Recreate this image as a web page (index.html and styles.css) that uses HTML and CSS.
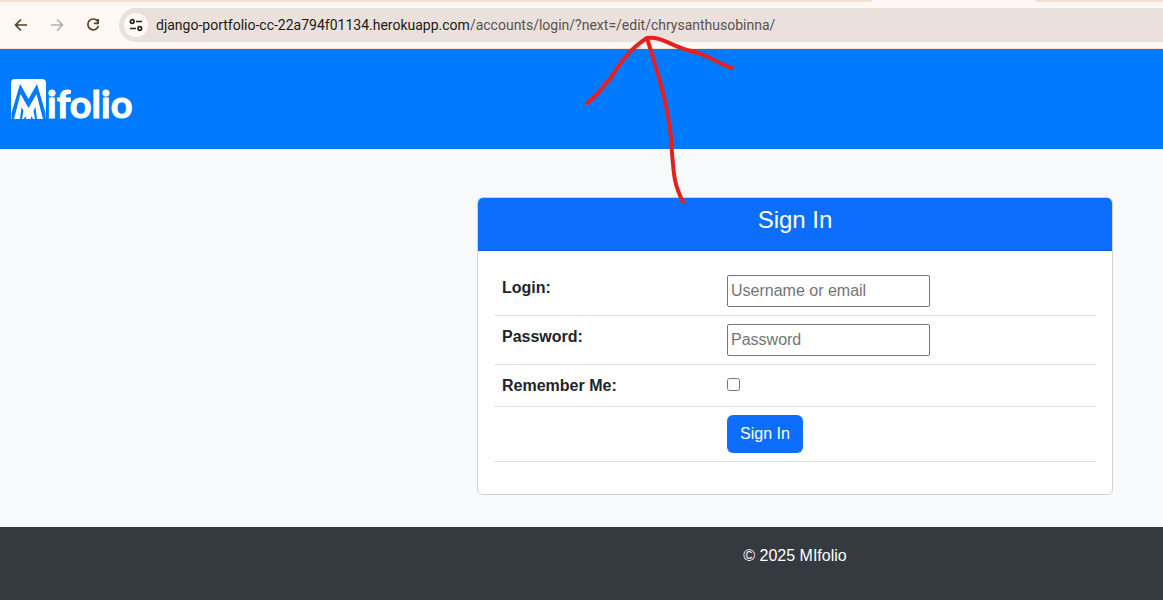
FILE: index.html
```html
<!DOCTYPE html>
<html lang="en">
<head>
<meta charset="utf-8">
<title>MIfolio - Sign In</title>
<link rel="stylesheet" href="styles.css">
</head>
<body>
<div class="browser">
  <div class="tabstrip"><span class="tab tab-left"></span><span class="tab tab-right"></span></div>
  <div class="toolbar">
    <button class="nav-btn" type="button" aria-label="Back"><svg width="16" height="16" viewBox="0 0 16 16"><path d="M14 8H3M8 2.500 2.500 8 8 13.500"/></svg></button>
    <button class="nav-btn disabled" type="button" aria-label="Forward"><svg width="16" height="16" viewBox="0 0 16 16"><path d="M2 8h11M8 2.500 13.500 8 8 13.500"/></svg></button>
    <button class="nav-btn" type="button" aria-label="Reload"><svg width="16" height="16" viewBox="0 0 16 16"><path d="M12.800 4.500A5.400 5.400 0 1 0 13.400 9M13.200 2v4.300H9"/></svg></button>
    <div class="address">
      <button class="site-info" type="button" aria-label="Site information"><svg width="14" height="14" viewBox="0 0 14 14"><circle cx="3.200" cy="3.500" r="1.800"/><path d="M7 3.500h6M1 10.500h6"/><circle cx="10.800" cy="10.500" r="1.800"/></svg></button>
      <div class="url">django-portfolio-cc-22a794f01134.herokuapp.com<span class="path">/accounts/login/?next=/edit/chrysanthusobinna/</span></div>
    </div>
  </div>
</div>
<header class="site-header">
  <a href="#" class="logo" aria-label="Mifolio">
    <svg width="140" height="50" viewBox="0 0 140 50">
      <path fill="#fff" d="M1 6a4 4 0 0 1 4-4h27a4 4 0 0 1 4 4v33l-1 3H1z"/>
      <path fill="#007bff" d="M1.500 42V36L10 7l8.500 15L27 7l8.500 29v6h-2.500L26.500 17 18.500 31 10.500 17 4 42z"/>
      <path fill="#007bff" d="M10 42l1.500-12 2 4-1.500 8zM14 42l1.200-3 1.300 3zM27 42l-1.500-12-2 4 1.500 8zM20.500 42l1.200-3 1.300 3z"/>
      <text class="wordmark" x="37" y="41">ifolio</text>
    </svg>
  </a>
</header>
<main class="content">
  <section class="card">
    <h1 class="card-header">Sign In</h1>
    <form class="card-body">
      <table class="fields">
        <tr><th><label for="login">Login:</label></th><td><input class="text" id="login" type="text" placeholder="Username or email"></td></tr>
        <tr><th><label for="password">Password:</label></th><td><input class="text" id="password" type="password" placeholder="Password"></td></tr>
        <tr><th><label for="remember">Remember Me:</label></th><td><input class="check" id="remember" type="checkbox"></td></tr>
        <tr><th></th><td><button class="submit" type="button">Sign In</button></td></tr>
      </table>
    </form>
  </section>
</main>
<footer class="site-footer"><p>© 2025 MIfolio</p></footer>
<svg class="annotation" width="160" height="180" viewBox="580 30 160 180" aria-hidden="true">
  <path d="M587 103C595 99 601 88 610 79C619 65 628 50 647 38C660 36 670 45 687 50C711 55 716 63 732 68M647 38C656 68 671 110 672 153C674 176 674 184 683 202"/>
</svg>
</body>
</html>
```
FILE: styles.css
```css
* { box-sizing: border-box; }
body {
  margin: 0;
  min-height: 100vh;
  display: flex;
  flex-direction: column;
  position: relative;
  background: #f8f9fa;
  color: #212529;
  font: 16px/24px "Liberation Sans", Arial, sans-serif;
}
.browser { background: #fff8f5; border-bottom: 1px solid #f5dfcd; }
.tabstrip { height: 2px; display: flex; justify-content: space-between; }
.tab { background: #f5dfcd; }
.tab-left { width: 75%; border-bottom-right-radius: 6px; }
.tab-right { width: 11%; border-bottom-left-radius: 6px; }
.toolbar { display: flex; align-items: center; padding: 6px 0 6px 13px; gap: 20px; }
.nav-btn {
  width: 16px; height: 16px; padding: 0; border: 0; background: none; display: block;
}
.nav-btn svg, .site-info svg { display: block; fill: none; stroke: #51412f; stroke-width: 1.7; }
.nav-btn.disabled svg { stroke: #b5aea8; }
.address {
  flex: 1;
  display: flex;
  align-items: center;
  gap: 8px;
  height: 34px;
  margin-left: -2px;
  padding-left: 5px;
  background: #eae1dd;
  border-radius: 17px 0 0 17px;
}
.site-info {
  width: 24px; height: 24px; padding: 5px; border: 0; border-radius: 50%; background: #fff8f5;
}
.site-info svg { stroke: #2b211c; }
.url { font: 14px/20px Roboto, sans-serif; color: #231a16; white-space: nowrap; }
.path { color: #5c514c; }
.site-header { height: 100px; padding: 28px 10px; background: #007bff; }
.logo { display: inline-block; }
.logo svg { display: block; }
.wordmark { font-family: Lato, sans-serif; font-size: 38px; font-weight: 700; fill: #fff; stroke: #fff; stroke-width: 1; }
.content { padding: 48px 50px 32px 477px; }
.card { background: #fff; border: 1px solid #d0d1d2; border-radius: 6px; overflow: hidden; }
.card-header {
  margin: 0;
  padding: 8px 16px 16px;
  background: #0d6efd;
  border-bottom: 1px solid #0b5ed7;
  color: #fff;
  text-align: center;
  font-size: 24px;
  font-weight: 400;
  line-height: 28px;
}
.card-body { padding: 16px 16px 32px; }
.fields { width: 100%; border-collapse: collapse; table-layout: fixed; }
.fields th, .fields td { padding: 8px; vertical-align: top; text-align: left; border-bottom: 1px solid #dee2e6; }
.fields th { width: 225px; padding-top: 9px; }
.fields td > * { display: block; }
.text {
  width: 203px;
  height: 32px;
  padding: 1px 3px;
  border: 1px solid #767676;
  border-radius: 2px;
  font: inherit;
}
.text::placeholder { color: #757575; }
.check { width: 13px; height: 13px; margin: 5px 0 6px; }
.submit {
  height: 38px;
  padding: 0 13px;
  border: 0;
  border-radius: 6px;
  background: #0d6efd;
  color: #fff;
  font: inherit;
}
.site-footer { flex: 1; padding: 17px 50px 16px 477px; background: #343a40; color: #fff; text-align: center; }
.site-footer p { margin: 0; }
.annotation { position: absolute; left: 580px; top: 30px; pointer-events: none; }
.annotation path { fill: none; stroke: #e71f1f; stroke-width: 4; stroke-linecap: round; stroke-linejoin: round; }
```
